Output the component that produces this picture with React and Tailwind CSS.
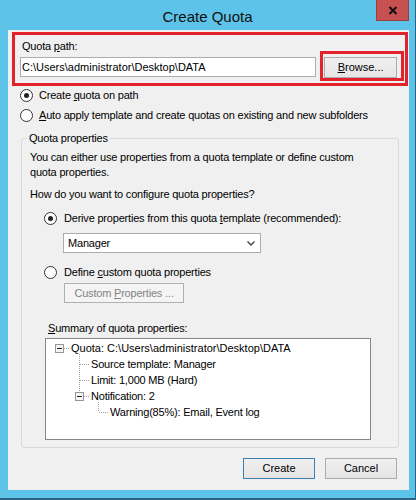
import React from 'react';

const Radio = ({ checked }) => (
    <span className="w-[13px] h-[13px] rounded-full border border-[#333] bg-white flex items-center justify-center shrink-0">
        {checked && <span className="w-[5px] h-[5px] rounded-full bg-[#222]" />}
    </span>
);

const treeRows = [
    { pl: 'pl-[25px]', text: 'Quota: C:\\Users\\administrator\\Desktop\\DATA', track: 'tracking-normal' },
    { pl: 'pl-[45px]', text: 'Source template: Manager' },
    { pl: 'pl-[45px]', text: 'Limit: 1,000 MB (Hard)' },
    { pl: 'pl-[45px]', text: 'Notification: 2' },
    { pl: 'pl-[64px]', text: 'Warning(85%): Email, Event log' },
];

const TreeLines = () => (
    <svg className="absolute inset-0 pointer-events-none" width="324" height="100" shapeRendering="crispEdges">
        <g stroke="#a0a0a0" strokeWidth="1" strokeDasharray="1 1" fill="none">
            <line x1="18" y1="9.5" x2="24" y2="9.5" />
            <line x1="33.5" y1="15" x2="33.5" y2="53" />
            <line x1="34" y1="25.5" x2="43" y2="25.5" />
            <line x1="34" y1="41.5" x2="43" y2="41.5" />
            <line x1="38" y1="57.5" x2="43" y2="57.5" />
            <line x1="52.5" y1="63" x2="52.5" y2="73" />
            <line x1="53" y1="73.5" x2="62" y2="73.5" />
        </g>
        <rect x="9.5" y="5.5" width="8" height="8" fill="#f4f4f4" stroke="#969696" />
        <line x1="11" y1="9.5" x2="16" y2="9.5" stroke="#222" />
        <rect x="29.5" y="53.5" width="8" height="8" fill="#f4f4f4" stroke="#969696" />
        <line x1="31" y1="57.5" x2="36" y2="57.5" stroke="#222" />
    </svg>
);

const App = () => {
    return (
        <div className="w-[416px] h-[500px] bg-[#5ec3e8] border-r border-b-2 border-[#2a6480] flex flex-col overflow-hidden font-['Liberation_Sans',Arial,sans-serif] text-[11px] leading-[15px] text-black tracking-[-0.2px]">
            {/* Title bar */}
            <div className="h-[30px] relative flex items-center justify-center pt-[2px] shrink-0">
                <span className="text-[15px] text-[#111] tracking-normal">Create Quota</span>
                <div className="absolute top-0 right-[6px] w-[33px] h-[21px] bg-[#c75050] border border-t-0 border-[#9e3d3d] flex items-center justify-center">
                    <svg width="10" height="9" viewBox="0 0 10 9">
                        <path d="M1.5 1 L8.5 8 M8.5 1 L1.5 8" stroke="#111" strokeWidth="2" fill="none" />
                    </svg>
                </div>
            </div>

            {/* Client area */}
            <div className="ml-[8px] w-[401px] h-[460px] bg-[#f0f0f0] relative px-[12px] pt-[9px]">
                <div className="ml-[2px]">
                    Quota <span className="underline">p</span>ath:
                </div>
                <div className="flex items-start mt-[3px]">
                    <div className="w-[297px] h-[20px] border border-[#abadb3] bg-white pl-[1px] flex items-center tracking-normal">
                        C:\Users\administrator\Desktop\DATA
                    </div>
                    <div className="ml-[8px] w-[73px] h-[21px] border border-[#acacac] bg-linear-to-b from-[#f0f0f0] to-[#e5e5e5] flex items-center justify-center tracking-normal">
                        <span><span className="underline">B</span>rowse...</span>
                    </div>
                </div>

                <div className="flex items-center h-[16px] mt-[9px]">
                    <Radio checked />
                    <span className="ml-[6px]">Create <span className="underline">q</span>uota on path</span>
                </div>
                <div className="flex items-center h-[16px] mt-[4px]">
                    <Radio />
                    <span className="ml-[6px]"><span className="underline">A</span>uto apply template and create quotas on existing and new subfolders</span>
                </div>

                {/* Quota properties group */}
                <fieldset className="mt-[8px] ml-[1px] w-[378px] border border-[#d9d9d9] rounded-[3px]">
                    <legend className="ml-[5px] px-[2px]">Quota properties</legend>
                    <div className="px-[8px] pt-[4px] pb-[7px]">
                        <p>
                            You can either use properties from a quota template or define custom
                            <br />
                            quota properties.
                        </p>
                        <p className="mt-[7px]">How do you want to configure quota properties?</p>

                        <div className="flex items-center h-[16px] mt-[8px] ml-[14px]">
                            <Radio checked />
                            <span className="ml-[7px]">Derive properties from this quota <span className="underline">t</span>emplate (recommended):</span>
                        </div>
                        <div className="mt-[7px] ml-[33px] w-[198px] h-[20px] border border-[#acacac] bg-white flex items-center justify-between pl-[4px] pr-[5px]">
                            <span>Manager</span>
                            <svg width="8" height="5" viewBox="0 0 8 5">
                                <path d="M0.5 0.5 L4 4 L7.5 0.5" stroke="#444" strokeWidth="1.4" fill="none" />
                            </svg>
                        </div>

                        <div className="flex items-center h-[16px] mt-[11px] ml-[14px]">
                            <Radio />
                            <span className="ml-[7px]">Define <span className="underline">c</span>ustom quota properties</span>
                        </div>
                        <div className="mt-[3px] ml-[34px] w-[120px] h-[20px] border border-[#adb2b5] bg-[#f4f4f4] text-[#838383] flex items-center justify-center">
                            <span>Custom <span className="underline">P</span>roperties ...</span>
                        </div>

                        <div className="mt-[18px] ml-[18px]">
                            <span className="underline">S</span>ummary of quota properties:
                        </div>
                        <div className="mt-[2px] ml-[15px] w-[326px] h-[102px] border border-[#828790] bg-white relative pt-[1px]">
                            <TreeLines />
                            {treeRows.map((row, i) => (
                                <div key={i} className={`h-[16px] flex items-center ${row.pl} ${row.track || ''}`}>
                                    {row.text}
                                </div>
                            ))}
                        </div>
                    </div>
                </fieldset>

                <div className="mt-[10px] flex justify-end gap-[10px] tracking-normal">
                    <div className="w-[72px] h-[21px] border border-[#3c7fb1] bg-linear-to-b from-[#f0f0f0] to-[#e5e5e5] flex items-center justify-center">
                        Create
                    </div>
                    <div className="w-[72px] h-[21px] border border-[#acacac] bg-linear-to-b from-[#f0f0f0] to-[#e5e5e5] flex items-center justify-center">
                        Cancel
                    </div>
                </div>

                {/* Red highlight annotations */}
                <div className="absolute left-[4px] top-[2px] w-[396px] h-[54px] border-[3px] border-[#e3232c] pointer-events-none" />
                <div className="absolute left-[312px] top-[21px] w-[84px] h-[30px] border-[3px] border-[#e3232c] pointer-events-none" />
            </div>
        </div>
    );
};

export default App;
